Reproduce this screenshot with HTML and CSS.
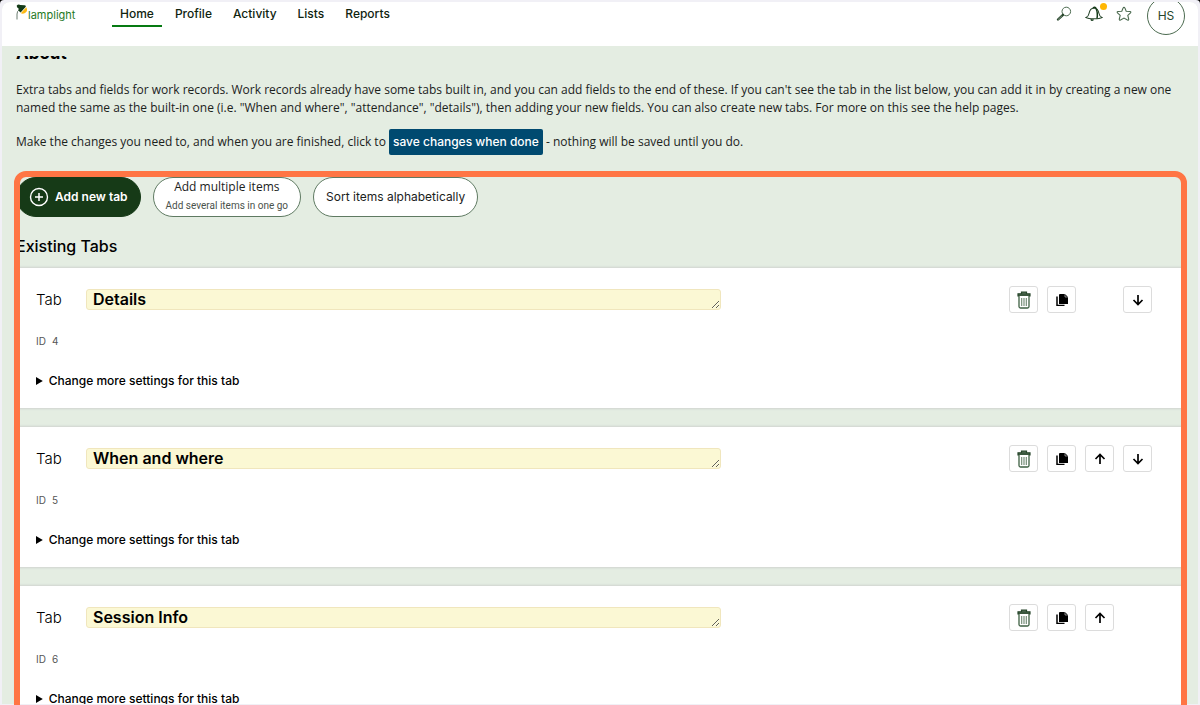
FILE: index.html
```html
<!DOCTYPE html>
<html lang="en">
<head>
<meta charset="utf-8">
<title>Lamplight</title>
<link rel="stylesheet" href="styles.css">
</head>
<body>
<svg class="defs" aria-hidden="true">
  <symbol id="trash" viewBox="0 0 14 18">
    <path d="M4.500 2.200V1h5v1.200M1 2.800h12v2H1z" fill="#4c6b50" stroke="#27452b" stroke-width="1.200"/>
    <path d="M2 5v10.500q0 1.500 1.500 1.500h7q1.500 0 1.500-1.500V5" fill="#fff" stroke="#3e6043" stroke-width="1.300"/>
    <path d="M4.700 7v8M7 7v8M9.300 7v8" fill="none" stroke="#6d8770" stroke-width="1.100"/>
  </symbol>
  <symbol id="copy" viewBox="0 0 12 12">
    <path d="M4 0h5l3 3v7H3V1q0-1 1-1z" fill="#000"/>
    <path d="M9 0v3h3" fill="none" stroke="#fff" stroke-width=".5"/>
    <path d="M1 2.500v9h7.500" fill="none" stroke="#000" stroke-width="1.500"/>
  </symbol>
  <symbol id="down" viewBox="0 0 12 12">
    <path d="M6 1v9.500M1.500 6 6 10.500 10.500 6" fill="none" stroke="#000" stroke-width="1.700"/>
  </symbol>
  <symbol id="up" viewBox="0 0 12 12">
    <path d="M6 11V1.500M1.500 6 6 1.500 10.500 6" fill="none" stroke="#000" stroke-width="1.700"/>
  </symbol>
</svg>
<div class="app">
  <header class="header">
    <a class="logo" href="#">
      <svg width="12" height="16" viewBox="0 0 12 16" aria-hidden="true">
        <path d="M1 15.500V10q0-3 2.500-4.500" fill="none" stroke="#6b7d70" stroke-width="1"/>
        <path d="M.8 1.500q1.500-1.800 3.700-.5l4 .2q1.500 0 1.300 1.600L4.600 8.500Q2 7.500 2.500 4.300.500 3.500.8 1.500z" fill="#143a18"/>
        <path d="M10.300 3.200 4.800 9.300q3.200 1.200 5.200-1t.3-5.100z" fill="#fdb913"/>
      </svg>
      <span>lamplight</span>
    </a>
    <nav class="nav">
      <a class="active" href="#">Home</a>
      <a href="#">Profile</a>
      <a href="#">Activity</a>
      <a href="#">Lists</a>
      <a href="#">Reports</a>
    </nav>
    <div class="tools">
      <button type="button" aria-label="Search"><svg width="16" height="16" viewBox="0 0 16 16"><circle cx="10.300" cy="5.500" r="4.300" fill="none" stroke="#4c6b50"/><path d="M7 8.800 2 13.500" stroke="#27452b" stroke-width="2.400" stroke-linecap="round"/><path d="M6 9.800 2 13.600" stroke="#8fa392" stroke-width=".8"/></svg></button>
      <button type="button" class="bell" aria-label="Notifications"><svg width="18" height="16" viewBox="0 0 18 16"><path d="M1 11.500q2.500-1 3-4Q5 2.200 9 2q4 .2 5 5.500.500 3 3 4-2 1.300-8 1.300t-8-1.300z" fill="none" stroke="#27452b" stroke-width="1.100"/><path d="M8 2q2-1.800 3 .3M6 13.300q.5 1.700 2.500.2M11 2.500q2 4 1 10" fill="none" stroke="#143a18" stroke-width="1.500"/></svg></button>
      <button type="button" aria-label="Favourites"><svg width="16" height="16" viewBox="0 0 16 16"><path d="M8 1.200q.6 0 .9.800l1.300 3.200 3.800.3q1.400.3.500 1.400l-2.700 2.500.9 3.800q.1 1.400-1.200.9L8 12.100l-3.500 2q-1.300.5-1.200-.9l.9-3.800-2.700-2.500q-.9-1.100.5-1.400l3.800-.3L7.100 2q.3-.8.900-.8z" fill="none" stroke="#4c6b50" stroke-width="1.100"/></svg></button>
      <button type="button" class="avatar">HS</button>
    </div>
  </header>
  <main class="content">
    <h1>About</h1>
    <p class="intro">Extra tabs and fields for work records. Work records already have some tabs built in, and you can add fields to the end of these. If you can't see the tab in the list below, you can add it in by creating a new one<br>named the same as the built-in one (i.e. "When and where", "attendance", "details"), then adding your new fields. You can also create new tabs. For more on this see the help pages.</p>
    <p class="save-line">Make the changes you need to, and when you are finished, click to <button type="button" class="save">save changes when done</button> - nothing will be saved until you do.</p>
    <div class="toolbar">
      <button type="button" class="pill primary"><svg width="20" height="20" viewBox="0 0 20 20" aria-hidden="true"><circle cx="10" cy="10" r="8.500" fill="none" stroke="#fff" stroke-width="1.400"/><path d="M10 6v8M6 10h8" stroke="#fff" stroke-width="1.500"/></svg><span>Add new tab</span></button>
      <button type="button" class="pill double"><span>Add multiple items</span><small>Add several items in one go</small></button>
      <button type="button" class="pill">Sort items alphabetically</button>
    </div>
    <h2>Existing Tabs</h2>
    <div class="cards">
      <section class="card">
        <div class="row">
          <label for="tab4">Tab</label><textarea id="tab4" rows="1">Details</textarea>
          <div class="actions">
            <button type="button" class="a1" aria-label="Delete"><svg width="14" height="18"><use href="#trash"/></svg></button>
            <button type="button" class="a2" aria-label="Copy"><svg width="12" height="12"><use href="#copy"/></svg></button>
            <button type="button" class="a4" aria-label="Move down"><svg width="12" height="12"><use href="#down"/></svg></button>
          </div>
        </div>
        <div class="id"><span>ID</span><span>4</span></div>
        <details><summary>Change more settings for this tab</summary></details>
      </section>
      <section class="card">
        <div class="row">
          <label for="tab5">Tab</label><textarea id="tab5" rows="1">When and where</textarea>
          <div class="actions">
            <button type="button" class="a1" aria-label="Delete"><svg width="14" height="18"><use href="#trash"/></svg></button>
            <button type="button" class="a2" aria-label="Copy"><svg width="12" height="12"><use href="#copy"/></svg></button>
            <button type="button" class="a3" aria-label="Move up"><svg width="12" height="12"><use href="#up"/></svg></button>
            <button type="button" class="a4" aria-label="Move down"><svg width="12" height="12"><use href="#down"/></svg></button>
          </div>
        </div>
        <div class="id"><span>ID</span><span>5</span></div>
        <details><summary>Change more settings for this tab</summary></details>
      </section>
      <section class="card">
        <div class="row">
          <label for="tab6">Tab</label><textarea id="tab6" rows="1">Session Info</textarea>
          <div class="actions">
            <button type="button" class="a1" aria-label="Delete"><svg width="14" height="18"><use href="#trash"/></svg></button>
            <button type="button" class="a2" aria-label="Copy"><svg width="12" height="12"><use href="#copy"/></svg></button>
            <button type="button" class="a3" aria-label="Move up"><svg width="12" height="12"><use href="#up"/></svg></button>
          </div>
        </div>
        <div class="id"><span>ID</span><span>6</span></div>
        <details><summary>Change more settings for this tab</summary></details>
      </section>
    </div>
  </main>
</div>
<div class="highlight"></div>
</body>
</html>
```
FILE: styles.css
```css
* { box-sizing: border-box; }
html { background: #000; }
body {
  margin: 0;
  height: 100vh;
  padding: 2px 2px 1px;
  position: relative;
  overflow: hidden;
  background: none;
  font: 12px/18px Inter, "Liberation Sans", sans-serif;
  color: #1b221c;
  isolation: isolate;
}
body::before {
  content: "";
  position: absolute;
  inset: 0;
  z-index: -1;
  border-radius: 4px 4px 0 0;
  background: #f1f0f6;
}
button { font: inherit; color: inherit; cursor: pointer; }
a { color: inherit; text-decoration: none; }
.defs { position: absolute; width: 0; height: 0; }
.app {
  height: 100%;
  overflow: hidden;
  display: flex;
  flex-direction: column;
  border-radius: 8px 8px 0 0;
  background: #e4ede2;
}
.header {
  flex: none;
  height: 44px;
  padding: 0 13px 0 14px;
  overflow: hidden;
  display: flex;
  align-items: flex-start;
  background: #fff;
}
.logo {
  display: flex;
  width: 96px;
  padding-top: 2px;
  color: #1f7a1f;
  font-size: 11px;
  line-height: 22px;
}
.nav { display: flex; gap: 5px; padding-top: 1px; font-weight: 500; color: #10240f; }
.nav a { padding: 0 8px; line-height: 22px; border-bottom: 2px solid transparent; }
.nav .active { border-color: #067a12; }
.tools { display: flex; gap: 13px; margin-left: auto; }
.tools button { display: flex; padding: 4px 0 0; border: 0; background: none; }
.tools .bell { position: relative; }
.bell::after {
  content: "";
  position: absolute;
  top: 1px;
  right: -4px;
  width: 7px;
  height: 7px;
  border-radius: 50%;
  background: #ffb703;
}
.tools .avatar {
  width: 38px;
  height: 38px;
  margin: -5px 0 0 2px;
  padding: 0;
  align-items: center;
  justify-content: center;
  border: 1px solid #4c6b50;
  border-radius: 50%;
  color: #27452b;
}
.content { flex: 1; min-height: 0; margin-top: 10px; padding: 0 14px; overflow: hidden; }
h1 { margin: -13px 0 0; font-size: 17px; line-height: 20px; font-weight: 700; color: #000; }
.intro { margin: 18px 0 12px; white-space: nowrap; }
.intro, .save-line, .double { font-family: "Open Sans", "Liberation Sans", sans-serif; }
.save-line { margin: 0; line-height: 26px; }
.save {
  height: 26px;
  padding: 0 4px;
  border: 0;
  border-radius: 2px;
  background: #004a70;
  color: #fff;
  font-family: Inter, "Liberation Sans", sans-serif;
  font-weight: 500;
}
.toolbar { display: flex; gap: 12px; margin-top: 22px; }
.pill {
  height: 40px;
  padding: 0 12px;
  border: 1px solid #5f7a62;
  border-radius: 20px;
  background: #fff;
}
.primary {
  display: flex;
  align-items: center;
  gap: 6px;
  border-color: #163a17;
  background: #163a17;
  color: #fff;
  font-weight: 600;
}
.double { display: flex; flex-direction: column; align-items: center; }
.double small { font-family: Roboto, "Liberation Sans", sans-serif; font-size: 10px; line-height: 20px; color: #4a524b; }
h2 { margin: 19px 0 12px; font-size: 16px; line-height: 20px; font-weight: 500; color: #000; }
.cards { display: grid; gap: 19px; }
.card {
  padding: 18px 32px 19px 20px;
  background: #fff;
  box-shadow: 0 0 2px 1px #cfd3cf;
}
.row {
  display: grid;
  grid-template-columns: 50px minmax(0, 11fr) minmax(0, 5fr) 143px;
  align-items: center;
}
.row label { font-size: 15px; font-weight: 300; color: #000; }
.row textarea {
  height: 21px;
  padding: 0 6px;
  border: 1px solid #f0e6bd;
  border-radius: 3px;
  background: #fbf8d4;
  color: #000;
  font: 600 16px/18px Inter, "Liberation Sans", sans-serif;
  overflow: hidden;
}
.actions { grid-column: 4; display: grid; grid-template-columns: repeat(4, 29px); gap: 9px; }
.actions button {
  height: 27px;
  padding: 0;
  display: grid;
  place-items: center;
  border: 1px solid #dcdcdc;
  border-radius: 3px;
  background: #fff;
}
.a1 { grid-column: 1; }
.a2 { grid-column: 2; }
.a3 { grid-column: 3; }
.a4 { grid-column: 4; }
.id { display: flex; gap: 6px; margin: 20px 0 24px; font-size: 10px; line-height: 16px; color: #555; }
summary { line-height: 16px; font-weight: 500; color: #000; }
.highlight {
  position: absolute;
  top: 171px;
  right: 13px;
  bottom: -20px;
  left: 14px;
  border: 6px solid #ff7544;
  border-radius: 12px;
  pointer-events: none;
}
```
